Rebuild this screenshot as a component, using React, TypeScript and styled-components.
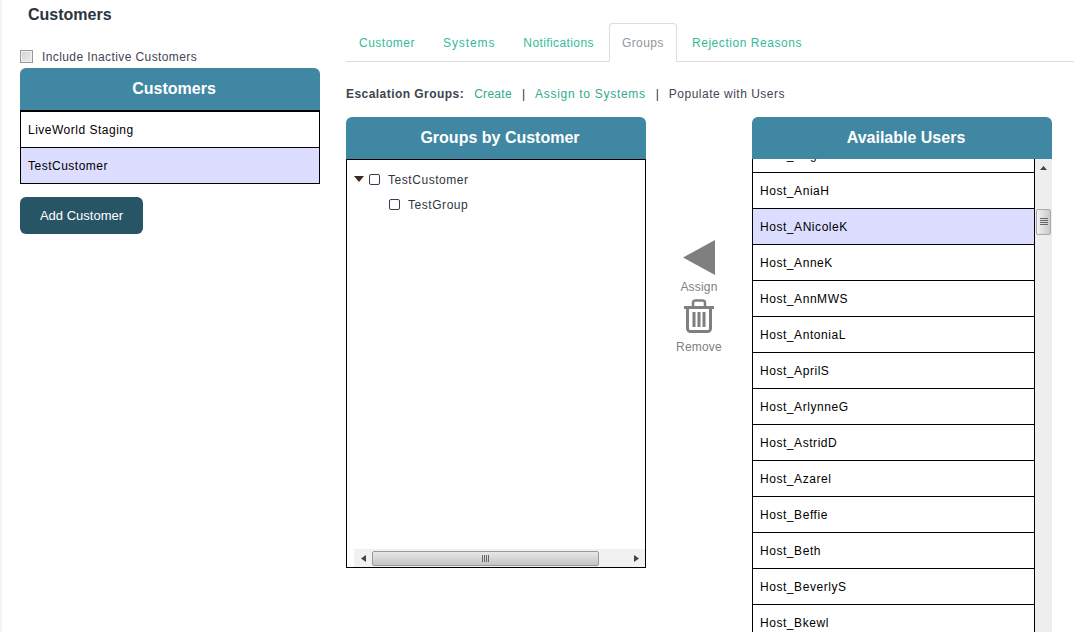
import React from "react";
import styled, { createGlobalStyle } from "styled-components";

const GlobalStyle = createGlobalStyle`
  html, body {
    margin: 0;
    padding: 0;
    height: 632px;
    overflow: hidden;
    background: #fff;
  }
  body {
    font-family: "Liberation Sans", Arial, sans-serif;
    font-size: 14px;
  }
`;

const Page = styled.div`
  display: flex;
  height: 632px;
  overflow: hidden;
  border-left: 2px solid #f4f4f4;
  box-sizing: border-box;
`;

const Sidebar = styled.aside`
  width: 300px;
  margin-left: 18px;
  flex: none;
  display: flex;
  flex-direction: column;
`;

const PageTitle = styled.h1`
  margin: 6px 0 0 8px;
  font-size: 16px;
  line-height: 17px;
  font-weight: bold;
  color: #2b3440;
`;

const InactiveRow = styled.label`
  display: flex;
  align-items: center;
  gap: 9px;
  margin-top: 22px;
  height: 23px;
  font-size: 12px;
  letter-spacing: 0.4px;
  color: #444455;
`;

const FakeCheck = styled.span`
  width: 11px;
  height: 11px;
  border: 1px solid #999;
  box-shadow: inset 0 0 0 1px #f0f0f0;
  background: linear-gradient(135deg, #d4d4d4, #eeeeee);
  flex: none;
`;

const PanelHeader = styled.div`
  height: 42px;
  box-sizing: border-box;
  padding-left: 8px;
  background: #3f87a3;
  border-radius: 6px 6px 0 0;
  color: #fff;
  font-size: 16px;
  font-weight: bold;
  display: flex;
  align-items: center;
  justify-content: center;
`;

const CustomerList = styled.div`
  border: 1px solid #000;
  border-top-width: 2px;
`;

const CustomerRow = styled.div<{ $selected?: boolean }>`
  height: 35px;
  box-sizing: border-box;
  padding: 0 7px;
  display: flex;
  align-items: center;
  font-size: 12px;
  letter-spacing: 0.5px;
  color: #000;
  background: ${(p) => (p.$selected ? "#ddddff" : "#fff")};
  & + & {
    border-top: 1px solid #000;
    height: 36px;
  }
`;

const AddButton = styled.button`
  margin-top: 13px;
  width: 123px;
  height: 37px;
  border: none;
  border-radius: 6px;
  background: #285565;
  color: #fff;
  font-family: inherit;
  font-size: 13px;
  padding: 0;
`;

const Main = styled.main`
  flex: 1;
  margin-left: 26px;
  min-width: 0;
`;

const TabBar = styled.nav`
  margin-top: 23px;
  height: 39px;
  box-sizing: border-box;
  border-bottom: 1px solid #ddd;
  display: flex;
`;

const Tab = styled.div<{ $active?: boolean; $spacing: number }>`
  height: ${(p) => (p.$active ? 39 : 38)}px;
  box-sizing: border-box;
  padding: ${(p) => (p.$active ? 0 : 1)}px ${(p) => (p.$active ? 12 : 14)}px 0;
  display: flex;
  align-items: center;
  font-size: 12px;
  letter-spacing: ${(p) => p.$spacing}px;
  color: ${(p) => (p.$active ? "#8f979c" : "#33bb99")};
  background: #fff;
  border: ${(p) => (p.$active ? "1px solid #ddd" : "none")};
  border-bottom: ${(p) => (p.$active ? "1px solid #fff" : "none")};
  border-radius: 4px 4px 0 0;
  margin: 0 ${(p) => (p.$active ? 1 : 0)}px;
  &:first-child {
    margin-left: -1px;
  }
`;

const SubNav = styled.div`
  display: flex;
  align-items: center;
  height: 20px;
  margin-top: 22px;
  font-size: 12px;
  color: #444455;
`;

const SubLabel = styled.strong`
  color: #3c4450;
  margin-right: 10px;
  letter-spacing: 0.45px;
`;

const SubLink = styled.span<{ $spacing: number }>`
  color: #33aa90;
  letter-spacing: ${(p) => p.$spacing}px;
`;

const SubCurrent = styled.span`
  letter-spacing: 0.5px;
`;

const Divider = styled.span`
  margin: 0 10px;
  color: #333;
`;

const Columns = styled.div`
  display: flex;
  margin-top: 13px;
`;

const Panel = styled.section`
  width: 300px;
  flex: none;
`;

const TreeBox = styled.div`
  height: 409px;
  border: 1px solid #000;
  display: flex;
  flex-direction: column;
  box-sizing: border-box;
`;

const TreeBody = styled.div`
  flex: 1;
  padding: 7px 0 0 7px;
`;

const TreeNode = styled.div<{ $depth?: number }>`
  display: flex;
  align-items: center;
  height: 25px;
  padding-left: ${(p) => (p.$depth ?? 0) * 35}px;
  font-size: 12px;
  letter-spacing: 0.55px;
  color: #333340;
`;

const TreeCheck = styled.span`
  width: 9px;
  height: 9px;
  border: 1px solid #3a3a4a;
  border-radius: 2px;
  margin-right: 8px;
  flex: none;
`;

const Caret = styled.span`
  width: 0;
  height: 0;
  border-left: 5px solid transparent;
  border-right: 5px solid transparent;
  border-top: 6px solid #3a2a20;
  margin: -2px 5px 0 0;
  flex: none;
`;

const HScroll = styled.div`
  height: 18px;
  margin-left: 7px;
  background: #f1f1f1;
  display: flex;
  align-items: center;
`;

const ScrollArrow = styled.span`
  width: 18px;
  flex: none;
  display: flex;
  align-items: center;
  justify-content: center;
  color: #444;
`;

const HThumb = styled.div`
  width: 227px;
  height: 15px;
  box-sizing: border-box;
  border: 1px solid #999;
  border-radius: 2px;
  background: linear-gradient(#e8e8e8, #c4c4c4);
  display: flex;
  align-items: center;
  justify-content: center;
`;

const HSpacer = styled.div`
  flex: 1;
`;

const Actions = styled.div`
  width: 106px;
  flex: none;
  display: flex;
  flex-direction: column;
  align-items: center;
  padding-top: 123px;
  font-size: 12px;
  letter-spacing: 0.2px;
  color: #808080;
`;

const ActionLabel = styled.span<{ $gap: number }>`
  line-height: 14px;
  margin-top: ${(p) => p.$gap}px;
`;

const IconSlot = styled.div`
  line-height: 0;
  margin-top: 5px;
`;

const UsersBox = styled.div`
  display: flex;
  height: 473px;
  overflow: hidden;
`;

const UsersList = styled.div`
  flex: 1;
  min-width: 0;
  overflow: hidden;
  border-left: 1px solid #000;
  border-right: 1px solid #000;
`;

const UserRow = styled.div<{ $selected?: boolean; $clipped?: boolean }>`
  height: 36px;
  box-sizing: border-box;
  border-bottom: 1px solid #000;
  padding: 0 7px;
  display: flex;
  align-items: center;
  font-size: 12px;
  letter-spacing: 0.55px;
  color: #000;
  background: ${(p) => (p.$selected ? "#ddddff" : "#fff")};
  margin-top: ${(p) => (p.$clipped ? -22 : 0)}px;
`;

const VScroll = styled.div`
  width: 17px;
  flex: none;
  background: #eeeeee;
  display: flex;
  flex-direction: column;
  align-items: center;
  padding-top: 7px;
  box-sizing: border-box;
`;

const VThumb = styled.div`
  margin-top: 39px;
  width: 15px;
  height: 26px;
  box-sizing: border-box;
  border: 1px solid #aaa;
  border-radius: 2px;
  background: linear-gradient(90deg, #f2f2f2, #c8c8c8);
  display: flex;
  align-items: center;
  justify-content: center;
`;

const users = [
  "Host_Angie",
  "Host_AniaH",
  "Host_ANicoleK",
  "Host_AnneK",
  "Host_AnnMWS",
  "Host_AntoniaL",
  "Host_AprilS",
  "Host_ArlynneG",
  "Host_AstridD",
  "Host_Azarel",
  "Host_Beffie",
  "Host_Beth",
  "Host_BeverlyS",
  "Host_Bkewl",
];

const tabs = [
  { label: "Customer", spacing: 0.5 },
  { label: "Systems", spacing: 0.9 },
  { label: "Notifications", spacing: 0.4 },
  { label: "Groups", spacing: 0.45 },
  { label: "Rejection Reasons", spacing: 0.55 },
];

const AssignIcon = () => (
  <svg width="32" height="35" viewBox="0 0 32 35">
    <polygon points="32,0 32,35 0,17.5" fill="#7f7f7f" />
  </svg>
);

const TrashIcon = () => (
  <svg width="32" height="34" viewBox="0 0 32 34" fill="none" stroke="#7f7f7f">
    <path d="M1 8.5h30" strokeWidth="3" />
    <path d="M10 7V4a2.5 2.5 0 0 1 2.5-2.5h7A2.5 2.5 0 0 1 22 4v3" strokeWidth="2.5" />
    <path d="M4.5 9v20.5a3 3 0 0 0 3 3h17a3 3 0 0 0 3-3V9" strokeWidth="3" />
    <path d="M11 13v15M16 13v15M21 13v15" strokeWidth="3" />
  </svg>
);

const App = () => {
  return (
    <Page>
      <GlobalStyle />
      <Sidebar>
        <PageTitle>Customers</PageTitle>
        <InactiveRow>
          <FakeCheck />
          Include Inactive Customers
        </InactiveRow>
        <PanelHeader>Customers</PanelHeader>
        <CustomerList>
          <CustomerRow>LiveWorld Staging</CustomerRow>
          <CustomerRow $selected>TestCustomer</CustomerRow>
        </CustomerList>
        <AddButton>Add Customer</AddButton>
      </Sidebar>
      <Main>
        <TabBar>
          {tabs.map((t) => (
            <Tab key={t.label} $active={t.label === "Groups"} $spacing={t.spacing}>
              {t.label}
            </Tab>
          ))}
        </TabBar>
        <SubNav>
          <SubLabel>Escalation Groups:</SubLabel>
          <SubLink $spacing={0.3}>Create</SubLink>
          <Divider>|</Divider>
          <SubLink $spacing={0.7}>Assign to Systems</SubLink>
          <Divider>|</Divider>
          <SubCurrent>Populate with Users</SubCurrent>
        </SubNav>
        <Columns>
          <Panel>
            <PanelHeader>Groups by Customer</PanelHeader>
            <TreeBox>
              <TreeBody>
                <TreeNode>
                  <Caret />
                  <TreeCheck />
                  TestCustomer
                </TreeNode>
                <TreeNode $depth={1}>
                  <TreeCheck />
                  TestGroup
                </TreeNode>
              </TreeBody>
              <HScroll>
                <ScrollArrow>
                  <svg width="5" height="7" viewBox="0 0 5 7">
                    <polygon points="5,0 5,7 0,3.5" fill="#444" />
                  </svg>
                </ScrollArrow>
                <HThumb>
                  <svg width="8" height="7" viewBox="0 0 8 7" stroke="#666">
                    <path d="M.5 0v7M2.5 0v7M4.5 0v7M6.5 0v7" />
                  </svg>
                </HThumb>
                <HSpacer />
                <ScrollArrow>
                  <svg width="5" height="7" viewBox="0 0 5 7">
                    <polygon points="0,0 0,7 5,3.5" fill="#444" />
                  </svg>
                </ScrollArrow>
              </HScroll>
            </TreeBox>
          </Panel>
          <Actions>
            <AssignIcon />
            <ActionLabel $gap={5}>Assign</ActionLabel>
            <IconSlot>
              <TrashIcon />
            </IconSlot>
            <ActionLabel $gap={7}>Remove</ActionLabel>
          </Actions>
          <Panel>
            <PanelHeader>Available Users</PanelHeader>
            <UsersBox>
              <UsersList>
                {users.map((u, i) => (
                  <UserRow key={u} $clipped={i === 0} $selected={u === "Host_ANicoleK"}>
                    {u}
                  </UserRow>
                ))}
              </UsersList>
              <VScroll>
                <svg width="7" height="4" viewBox="0 0 7 4">
                  <polygon points="0,4 7,4 3.5,0" fill="#444" />
                </svg>
                <VThumb>
                  <svg width="8" height="8" viewBox="0 0 8 8" stroke="#666">
                    <path d="M0 .5h8M0 2.5h8M0 4.5h8M0 6.5h8" />
                  </svg>
                </VThumb>
              </VScroll>
            </UsersBox>
          </Panel>
        </Columns>
      </Main>
    </Page>
  );
};

export default App;
